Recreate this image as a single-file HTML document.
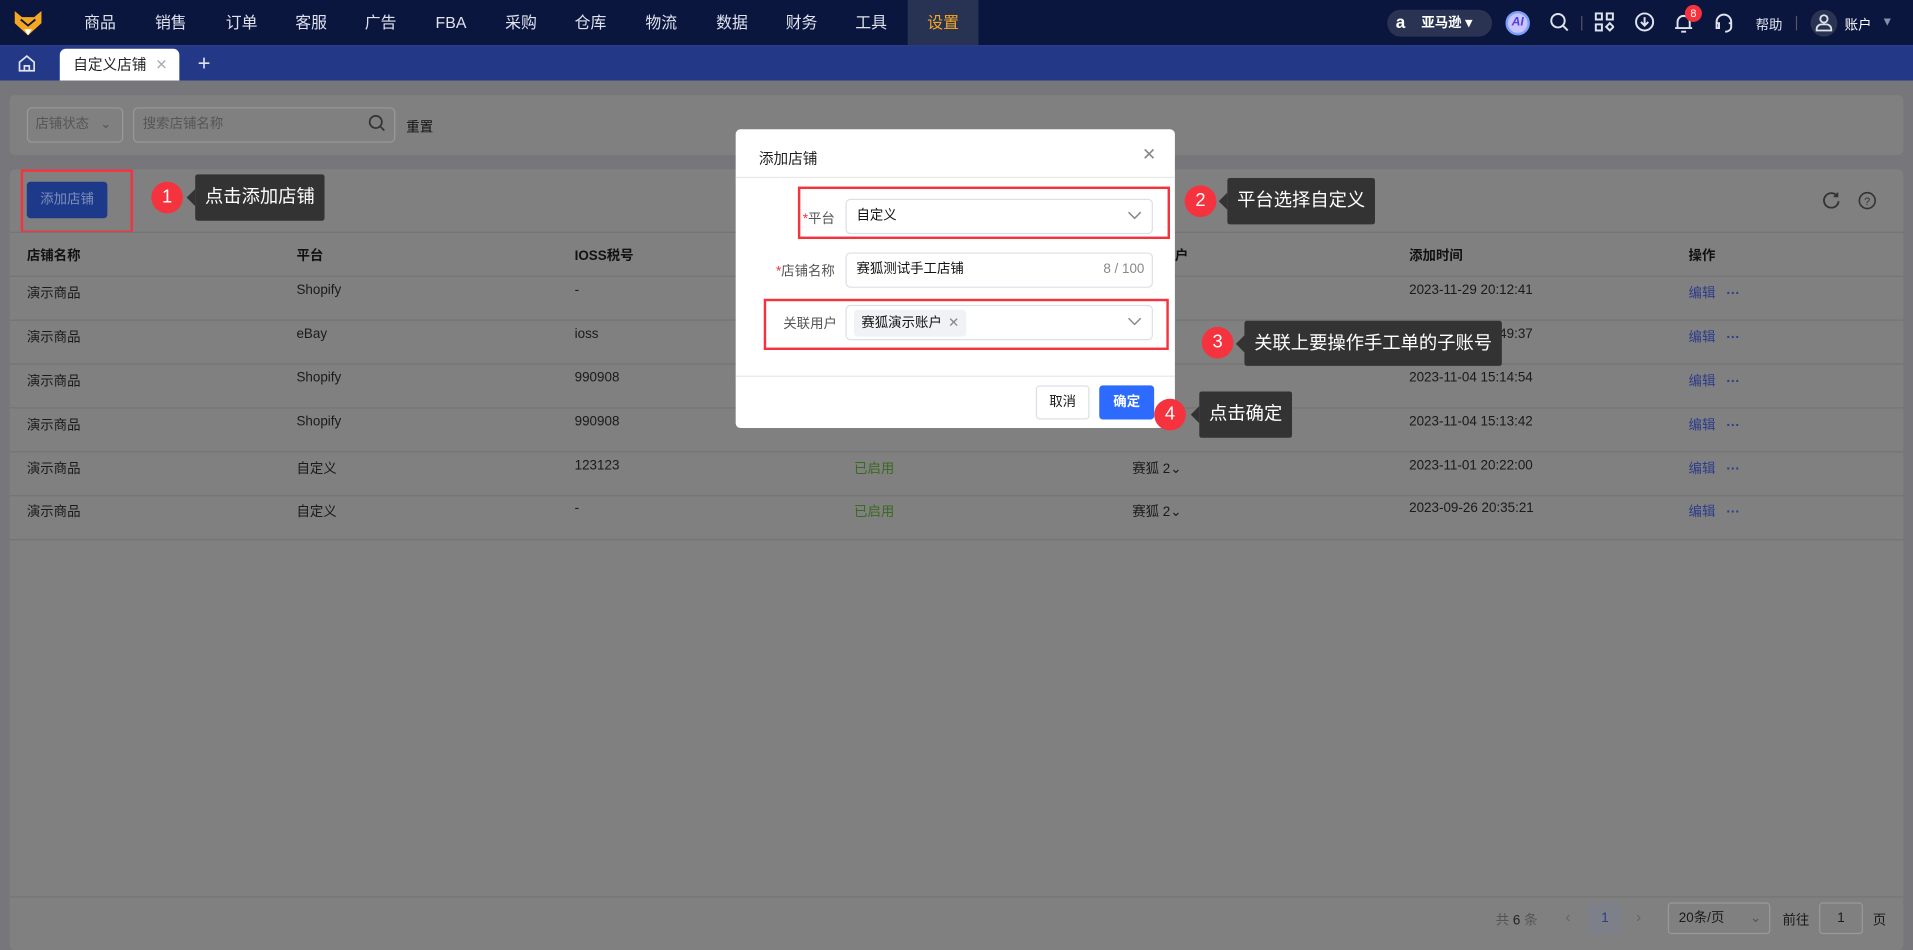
<!DOCTYPE html>
<html><head><meta charset="utf-8">
<style>
*{margin:0;padding:0;box-sizing:border-box}
html,body{width:1913px;height:950px;overflow:hidden;background:#77777b}
#w{position:absolute;left:0;top:0;width:1568px;height:779px;transform:scale(1.22003,1.21951);transform-origin:0 0;font-family:"Liberation Sans","Noto Sans CJK SC",sans-serif;font-size:11px;color:#1a1a1a;background:#77777b}
.a{position:absolute}
.nav{left:0;top:0;width:1568px;height:37px;background:#0b163e}
.mi{top:0;height:37px;line-height:37px;color:#dfe3ee;font-size:13px}
.tab{left:0;top:37px;width:1568px;height:29px;background:#233987}
.panel{background:#808080;border-radius:4px}
.th{font-weight:bold;color:#111;top:201px}
.hl{height:1px;background:#747474;left:8px;width:1552px}
.td{color:#1a1a1a}
.ed{color:#2b3c8c}
.circ{width:26px;height:26px;border-radius:50%;background:#f5333f;color:#fff;text-align:center;line-height:26px;font-size:15px}
.tip{background:#333;color:#fff;font-size:15px;border-radius:2px;padding:0 8px;white-space:nowrap}
.tip:before{content:"";position:absolute;left:-7px;top:50%;margin-top:-7px;border:7px solid transparent;border-left:0;border-right-color:#333}
.inp{border:1px solid #dcdfe6;border-radius:4px;background:#fff}
.red{border:2px solid #f5333f}
</style></head><body><div id="w">
<div class="a nav"></div>
<svg class="a" style="left:12px;top:9px" width="22" height="20" viewBox="0 0 22 20"><path d="M0 0 L6 5 L16 5 L22 0 L22 10 L11 20 L0 10Z" fill="#f5a623"/><path d="M5 7 L11 12 L17 7" fill="none" stroke="#0b163e" stroke-width="1.5"/><path d="M8 15 L11 20 L14 15Z" fill="#fff"/></svg>
<div class="a" style="left:744px;top:0;width:58px;height:37px;background:#283353"></div>
<div class="a mi" style="left:69px">商品</div><div class="a mi" style="left:127px">销售</div><div class="a mi" style="left:185px">订单</div><div class="a mi" style="left:242px">客服</div><div class="a mi" style="left:299px">广告</div><div class="a mi" style="left:357px">FBA</div><div class="a mi" style="left:414px">采购</div><div class="a mi" style="left:471px">仓库</div><div class="a mi" style="left:529px">物流</div><div class="a mi" style="left:587px">数据</div><div class="a mi" style="left:644px">财务</div><div class="a mi" style="left:701px">工具</div><div class="a mi" style="left:760px;color:#f5a623">设置</div>
<div class="a" style="left:1137px;top:8px;width:86px;height:22px;border-radius:11px;background:#2a3452;color:#fff;font-size:11px;line-height:22px;padding-left:28px;font-weight:bold">亚马逊 ▾</div>
<div class="a" style="left:1144px;top:9px;color:#fff;font-weight:bold;font-size:14px;line-height:18px">a</div>
<div class="a" style="left:1234px;top:9px;width:20px;height:20px;border-radius:50%;background:#c9c3ff;border:2px solid #7aa0ff;color:#5240e0;font-size:10px;font-weight:bold;text-align:center;line-height:16px;font-style:italic">AI</div>
<svg class="a" style="left:1270px;top:10px" width="16" height="16" viewBox="0 0 16 16" fill="none" stroke="#dfe3ee" stroke-width="1.6"><circle cx="7" cy="7" r="5.5"/><path d="M11 11l4 4"/></svg>
<div class="a" style="left:1296px;top:13px;width:1px;height:12px;background:#556"></div>
<svg class="a" style="left:1307px;top:10px" width="16" height="16" viewBox="0 0 16 16" fill="none" stroke="#dfe3ee" stroke-width="1.6"><rect x="1" y="1" width="5" height="5"/><rect x="10" y="1" width="5" height="5"/><rect x="1" y="10" width="5" height="5"/><path d="M12.5 9l3 3-3 3-3-3z"/></svg>
<svg class="a" style="left:1340px;top:10px" width="16" height="16" viewBox="0 0 16 16" fill="none" stroke="#dfe3ee" stroke-width="1.6"><circle cx="8" cy="8" r="7"/><path d="M8 4v7M5 8l3 3 3-3"/></svg>
<svg class="a" style="left:1372px;top:10px" width="16" height="18" viewBox="0 0 16 18" fill="none" stroke="#dfe3ee" stroke-width="1.6"><path d="M3 13V8a5 5 0 0110 0v5M1 13h14M6 16h4"/></svg>
<div class="a" style="left:1381px;top:4px;width:14px;height:14px;border-radius:50%;background:#f5333f;color:#fff;font-size:9px;text-align:center;line-height:14px">8</div>
<svg class="a" style="left:1405px;top:10px" width="16" height="18" viewBox="0 0 16 18" fill="none" stroke="#dfe3ee" stroke-width="1.6"><path d="M2 11V8a6 6 0 0112 0v3M2 9h2v4H2zM12 9h2v3c0 2-2 4-5 4"/></svg>
<div class="a" style="left:1439px;top:12px;color:#dfe3ee;font-size:11px">帮助</div>
<div class="a" style="left:1472px;top:13px;width:1px;height:12px;background:#556"></div>
<div class="a" style="left:1484px;top:8px;width:22px;height:22px;border-radius:50%;background:#2a3452"></div>
<svg class="a" style="left:1488px;top:11px" width="14" height="15" viewBox="0 0 14 15" fill="none" stroke="#dfe3ee" stroke-width="1.5"><circle cx="7" cy="4.5" r="3"/><path d="M1 14v-1a4 4 0 014-4h4a4 4 0 014 4v1z"/></svg>
<div class="a" style="left:1512px;top:12px;color:#fff;font-size:11px">账户</div>
<div class="a" style="left:1542px;top:13px;color:#8890a8;font-size:10px">▼</div>
<div class="a tab"></div>
<svg class="a" style="left:15px;top:45px" width="14" height="14" viewBox="0 0 14 14" fill="none" stroke="#dfe3ee" stroke-width="1.4"><path d="M1 6l6-5 6 5v7H1zM5 13V9h4v4"/></svg>
<div class="a" style="left:49px;top:40px;width:98px;height:26px;background:#fff;border-radius:5px 5px 0 0;font-size:12px;line-height:26px;padding-left:11px;color:#222">自定义店铺 <span style="color:#aab;margin-left:4px">✕</span></div>
<div class="a" style="left:162px;top:40px;color:#dfe3ee;font-size:18px;line-height:24px">+</div>
<div class="a panel" style="left:8px;top:78px;width:1552px;height:49px"></div>
<div class="a" style="left:22px;top:88px;width:79px;height:29px;border:1px solid #999;border-radius:4px;color:#555;font-size:11px;line-height:27px;padding-left:6px">店铺状态 <span style="margin-left:6px">⌄</span></div>
<div class="a" style="left:109px;top:88px;width:215px;height:29px;border:1px solid #999;border-radius:4px;color:#555;font-size:11px;line-height:27px;padding-left:7px">搜索店铺名称</div>
<svg class="a" style="left:302px;top:94px" width="14" height="14" viewBox="0 0 14 14" fill="none" stroke="#333" stroke-width="1.4"><circle cx="6" cy="6" r="5"/><path d="M10 10l3 3"/></svg>
<div class="a" style="left:333px;top:96px;font-size:11px;color:#111">重置</div>
<div class="a panel" style="left:8px;top:139px;width:1552px;height:640px"></div>
<div class="a" style="left:22px;top:149px;width:66px;height:30px;background:#1d3a8a;border-radius:3px;color:#7f8fb8;font-size:11px;text-align:center;line-height:30px">添加店铺</div>
<div class="a red" style="left:17px;top:139px;width:92px;height:52px"></div>
<svg class="a" style="left:1494px;top:157px" width="14" height="14" viewBox="0 0 14 14" fill="none" stroke="#333" stroke-width="1.5"><path d="M12 4A6 6 0 1013 8M12 1v3H9"/></svg>
<svg class="a" style="left:1523px;top:157px" width="15" height="15" viewBox="0 0 15 15" fill="none" stroke="#333" stroke-width="1.3"><circle cx="7.5" cy="7.5" r="6.5"/><text x="7.5" y="11" font-size="9" text-anchor="middle" fill="#333" stroke="none" font-family="Liberation Sans">?</text></svg>
<div class="a hl" style="top:190px"></div>
<div class="a th" style="left:22px">店铺名称</div><div class="a th" style="left:243px">平台</div><div class="a th" style="left:471px">IOSS税号</div><div class="a th" style="left:963px">户</div><div class="a th" style="left:1155px">添加时间</div><div class="a th" style="left:1384px">操作</div>
<div class="a hl" style="top:226px"></div><div class="a hl" style="top:262px"></div><div class="a hl" style="top:298px"></div><div class="a hl" style="top:334px"></div><div class="a hl" style="top:370px"></div><div class="a hl" style="top:406px"></div><div class="a hl" style="top:442px"></div>
<div class="a td" style="left:22px;top:232px">演示商品</div><div class="a td" style="left:243px;top:232px">Shopify</div><div class="a td" style="left:471px;top:232px">-</div><div class="a td" style="left:1155px;top:232px">2023-11-29 20:12:41</div>
<div class="a td" style="left:22px;top:268px">演示商品</div><div class="a td" style="left:243px;top:268px">eBay</div><div class="a td" style="left:471px;top:268px">ioss</div><div class="a td" style="left:1155px;top:268px">2023-11-06 15:49:37</div>
<div class="a td" style="left:22px;top:304px">演示商品</div><div class="a td" style="left:243px;top:304px">Shopify</div><div class="a td" style="left:471px;top:304px">990908</div><div class="a td" style="left:1155px;top:304px">2023-11-04 15:14:54</div>
<div class="a td" style="left:22px;top:340px">演示商品</div><div class="a td" style="left:243px;top:340px">Shopify</div><div class="a td" style="left:471px;top:340px">990908</div><div class="a td" style="left:1155px;top:340px">2023-11-04 15:13:42</div>
<div class="a td" style="left:22px;top:376px">演示商品</div><div class="a td" style="left:243px;top:376px">自定义</div><div class="a td" style="left:471px;top:376px">123123</div><div class="a" style="left:700px;top:376px;color:#3a6a20;font-size:11px">已启用</div><div class="a td" style="left:928px;top:376px">赛狐 2⌄</div><div class="a td" style="left:1155px;top:376px">2023-11-01 20:22:00</div>
<div class="a td" style="left:22px;top:411px">演示商品</div><div class="a td" style="left:243px;top:411px">自定义</div><div class="a td" style="left:471px;top:411px">-</div><div class="a" style="left:700px;top:411px;color:#3a6a20;font-size:11px">已启用</div><div class="a td" style="left:928px;top:411px">赛狐 2⌄</div><div class="a td" style="left:1155px;top:411px">2023-09-26 20:35:21</div>
<div class="a ed" style="left:1384px;top:232px">编辑 <b style="margin-left:6px">···</b></div><div class="a ed" style="left:1384px;top:268px">编辑 <b style="margin-left:6px">···</b></div><div class="a ed" style="left:1384px;top:304px">编辑 <b style="margin-left:6px">···</b></div><div class="a ed" style="left:1384px;top:340px">编辑 <b style="margin-left:6px">···</b></div><div class="a ed" style="left:1384px;top:376px">编辑 <b style="margin-left:6px">···</b></div><div class="a ed" style="left:1384px;top:411px">编辑 <b style="margin-left:6px">···</b></div>
<div class="a hl" style="top:735px"></div>
<div class="a" style="left:1226px;top:746px;color:#555;font-size:11px">共 <span style="color:#222">6</span> 条</div>
<div class="a" style="left:1283px;top:744px;color:#666;font-size:13px">‹</div>
<div class="a" style="left:1302px;top:740px;width:27px;height:26px;background:#7d8089;color:#2b3c8c;text-align:center;line-height:26px;font-size:11px">1</div>
<div class="a" style="left:1341px;top:744px;color:#666;font-size:13px">›</div>
<div class="a" style="left:1367px;top:740px;width:84px;height:26px;border:1px solid #999;border-radius:3px;font-size:11px;line-height:24px;padding-left:8px">20条/页 <span style="margin-left:18px;color:#555">⌄</span></div>
<div class="a" style="left:1461px;top:746px;font-size:11px">前往</div>
<div class="a" style="left:1491px;top:740px;width:36px;height:26px;border:1px solid #999;border-radius:3px;font-size:11px;line-height:24px;text-align:center">1</div>
<div class="a" style="left:1535px;top:746px;font-size:11px">页</div>
<div class="a" style="left:603px;top:106px;width:360px;height:245px;background:#fff;border-radius:4px"></div>
<div class="a" style="left:622px;top:121px;font-size:12px;color:#222">添加店铺</div>
<div class="a" style="left:936px;top:118px;font-size:14px;color:#888">✕</div>
<div class="a" style="left:603px;top:145px;width:360px;height:1px;background:#e8e8e8"></div>
<div class="a" style="left:658px;top:171px;font-size:11px;color:#555"><span style="color:#f5333f">*</span>平台</div>
<div class="a inp" style="left:693px;top:163px;width:252px;height:29px;font-size:11px;line-height:27px;padding-left:8px;color:#111">自定义</div>
<svg class="a" style="left:924px;top:173px" width="12" height="8" viewBox="0 0 12 8" fill="none" stroke="#888" stroke-width="1.2"><path d="M1 1l5 5 5-5"/></svg>
<div class="a red" style="left:654px;top:153px;width:305px;height:43px"></div>
<div class="a" style="left:636px;top:214px;font-size:11px;color:#555"><span style="color:#f5333f">*</span>店铺名称</div>
<div class="a inp" style="left:693px;top:207px;width:252px;height:29px;font-size:11px;line-height:27px;padding-left:8px;color:#111">赛狐测试手工店铺<span style="position:absolute;right:6px;color:#888">8 / 100</span></div>
<div class="a" style="left:642px;top:257px;font-size:11px;color:#555">关联用户</div>
<div class="a inp" style="left:693px;top:250px;width:252px;height:29px"></div>
<div class="a" style="left:700px;top:254px;width:92px;height:22px;background:#f0f2f5;border-radius:3px;font-size:11px;line-height:22px;padding-left:6px;color:#111">赛狐演示账户 <span style="color:#888;margin-left:2px">✕</span></div>
<svg class="a" style="left:924px;top:260px" width="12" height="8" viewBox="0 0 12 8" fill="none" stroke="#888" stroke-width="1.2"><path d="M1 1l5 5 5-5"/></svg>
<div class="a red" style="left:626px;top:245px;width:332px;height:42px"></div>
<div class="a" style="left:603px;top:308px;width:360px;height:1px;background:#e8e8e8"></div>
<div class="a" style="left:849px;top:316px;width:44px;height:28px;border:1px solid #dcdfe6;border-radius:3px;font-size:11px;text-align:center;line-height:26px">取消</div>
<div class="a" style="left:901px;top:316px;width:45px;height:28px;background:#2d6bff;border-radius:3px;font-size:11px;text-align:center;line-height:28px;color:#fff;font-weight:bold">确定</div>
<div class="a circ" style="left:124px;top:149px">1</div>
<div class="a tip" style="left:160px;top:143px;height:38px;line-height:38px">点击添加店铺</div>
<div class="a circ" style="left:971px;top:152px">2</div>
<div class="a tip" style="left:1006px;top:146px;height:38px;line-height:38px">平台选择自定义</div>
<div class="a circ" style="left:985px;top:268px">3</div>
<div class="a tip" style="left:1020px;top:263px;height:37px;line-height:37px">关联上要操作手工单的子账号</div>
<div class="a circ" style="left:946px;top:327px">4</div>
<div class="a tip" style="left:983px;top:321px;height:38px;line-height:38px">点击确定</div>
</div></body></html>
